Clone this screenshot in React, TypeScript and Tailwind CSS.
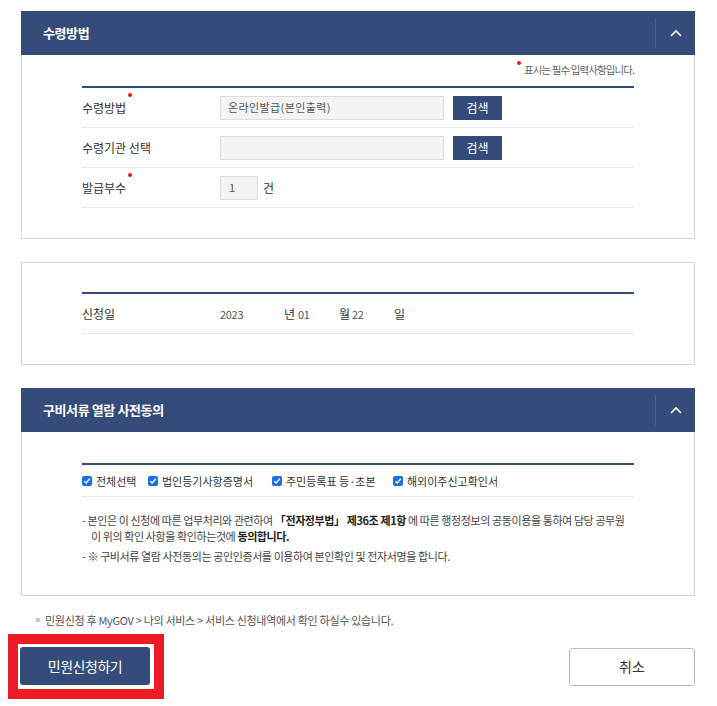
import React from 'react'

const font = "font-['Noto_Sans_CJK_KR','Noto_Sans',sans-serif]"

function Chevron() {
  return (
    <svg width="12" height="8" viewBox="0 0 12 8" fill="none">
      <path d="M1 7 L6 2 L11 7" stroke="#ffffff" strokeWidth="1.6" />
    </svg>
  )
}

function PanelHeader({ title }: { title: string }) {
  return (
    <div className="flex h-[44px] items-center justify-between bg-[#354c7a] pl-[22px]">
      <h2 className="text-[13px] font-bold tracking-[-0.4px] text-white">{title}</h2>
      <div className="flex h-[30px] w-[40px] items-center justify-center border-l border-[#4b6090]">
        <Chevron />
      </div>
    </div>
  )
}

function Dot() {
  return <span className="ml-[2px] inline-block h-[4px] w-[4px] -translate-y-[7px] rounded-full bg-[#e8191f] align-top" />
}

function Row({ label, required, children }: { label: string; required?: boolean; children: React.ReactNode }) {
  return (
    <div className="flex h-[40px] items-center border-b border-[#e9e9e9]">
      <div className="w-[138px] text-[12px] leading-[16px] text-[#333]">
        {label}
        {required && <Dot />}
      </div>
      <div className="flex items-center">{children}</div>
    </div>
  )
}

function SearchButton() {
  return (
    <button className="ml-[9px] h-[24px] w-[49px] bg-[#354c7a] text-[12px] leading-[24px] text-white">검색</button>
  )
}

function Check({ label }: { label: string }) {
  return (
    <label className="flex items-center gap-[4px] text-[11px] leading-[16px] text-[#333]">
      <span className="flex h-[10px] w-[10px] items-center justify-center rounded-[2px] bg-[#1c6fe3]">
        <svg width="8" height="8" viewBox="0 0 8 8" fill="none">
          <path d="M1.3 4.2 L3.2 6 L6.8 1.8" stroke="#fff" strokeWidth="1.4" />
        </svg>
      </span>
      {label}
    </label>
  )
}

export default function App() {
  return (
    <div className={`w-[717px] bg-white pt-[11px] pb-[4px] ${font}`}>
      {/* 수령방법 */}
      <section className="ml-[21px] mr-[22px]">
        <PanelHeader title="수령방법" />
        <div className="border border-t-0 border-[#d6d6d6] px-[60px] pt-[7px] pb-[30px]">
          <p className="text-right text-[10.5px] leading-[16px] tracking-[-0.9px] text-[#666]">
            <span className="mr-[3px] inline-block h-[4px] w-[4px] -translate-y-[1px] rounded-full bg-[#e8191f] align-top" />
            표시는 필수 입력사항입니다.
          </p>
          <div className="mt-[8px] border-t-[2px] border-[#354c7a]">
            <Row label="수령방법" required>
              <div className="flex h-[24px] w-[224px] items-center border border-[#dcdcdc] bg-[#f4f4f4] pl-[7px] text-[11px] tracking-[0.4px] text-[#555]">
                온라인발급(본인출력)
              </div>
              <SearchButton />
            </Row>
            <Row label="수령기관 선택">
              <div className="h-[24px] w-[224px] border border-[#dcdcdc] bg-[#f4f4f4]" />
              <SearchButton />
            </Row>
            <Row label="발급부수" required>
              <div className="flex h-[24px] w-[38px] items-center border border-[#dcdcdc] bg-[#f4f4f4] pl-[8px] text-[11px] text-[#555]">
                1
              </div>
              <span className="ml-[5px] text-[12px] text-[#333]">건</span>
            </Row>
          </div>
        </div>
      </section>

      {/* 신청일 */}
      <section className="mt-[23px] ml-[21px] mr-[22px] border border-[#d6d6d6] px-[60px] pt-[29px] pb-[30px]">
        <div className="border-t-[2px] border-[#354c7a]">
          <div className="flex h-[40px] items-center border-b border-[#e9e9e9] text-[12px] leading-[16px] text-[#333]">
            <span className="w-[138px]">신청일</span>
            <span className="w-[64px] text-[11px] tracking-[-0.3px] text-[#555]">2023</span>
            <span className="w-[14px]">년</span>
            <span className="w-[41px] text-[11px] tracking-[-0.3px] text-[#555]">01</span>
            <span className="w-[13px]">월</span>
            <span className="w-[42px] text-[11px] tracking-[-0.3px] text-[#555]">22</span>
            <span>일</span>
          </div>
        </div>
      </section>

      {/* 구비서류 열람 사전동의 */}
      <section className="mt-[23px] ml-[21px] mr-[22px]">
        <PanelHeader title="구비서류 열람 사전동의" />
        <div className="border border-t-0 border-[#d6d6d6] px-[60px] pt-[31px] pb-[31px]">
          <div className="border-t-[2px] border-[#354c7a]">
            <div className="flex h-[32px] items-center border-b border-[#e9e9e9]">
              <div className="w-[66px]"><Check label="전체선택" /></div>
              <div className="w-[124px]"><Check label="법인등기사항증명서" /></div>
              <div className="w-[121px]"><Check label="주민등록표 등·초본" /></div>
              <Check label="해외이주신고확인서" />
            </div>
          </div>
          <div className="mt-[15px] whitespace-nowrap text-[11px] leading-[16px] tracking-[-0.4px] text-[#444]">
            <p>
              - 본인은 이 신청에 따른 업무처리와 관련하여 <b className="font-bold text-[#222]">「전자정부법」 제36조 제1항</b> 에 따른 행정정보의 공동이용을 통하여 담당 공무원
            </p>
            <p className="pl-[9px]">
              이 위의 확인 사항을 확인하는것에 <b className="font-bold text-[#222]">동의합니다.</b>
            </p>
            <p className="mt-[4px]">- ※ 구비서류 열람 사전동의는 공인인증서를 이용하여 본인확인 및 전자서명을 합니다.</p>
          </div>
        </div>
      </section>

      <p className="mt-[16px] flex items-center pl-[36px] text-[11px] leading-[16px] tracking-[-0.3px] text-[#555]">
        <span className="mr-[5px] inline-block h-[4px] w-[4px] bg-[#c8c8c8]" />
        민원신청 후 MyGOV &gt; 나의 서비스 &gt; 서비스 신청내역에서 확인 하실수 있습니다.
      </p>

      <div className="mt-[6px] flex items-center justify-between pl-[8px] pr-[22px]">
        <div className="border-[10px] border-[#ed1c24] pt-[3px] pr-[4px] pb-[4px] pl-[2px]">
          <button className="h-[38px] w-[130px] rounded-[3px] bg-[#354c7a] text-[14px] tracking-[-0.5px] text-white">
            민원신청하기
          </button>
        </div>
        <button className="h-[38px] w-[126px] rounded-[3px] border border-[#b9b9b9] bg-white text-[14px] text-[#333]">
          취소
        </button>
      </div>
    </div>
  )
}
